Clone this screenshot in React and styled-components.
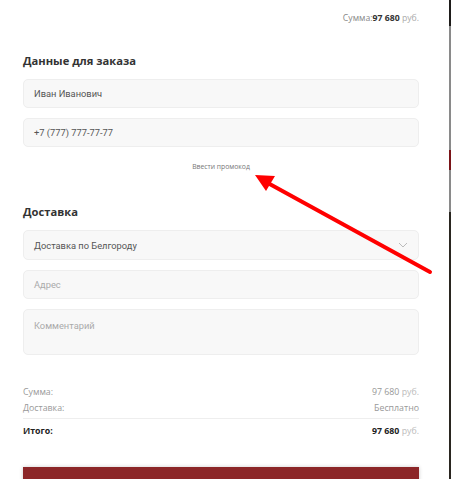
import styled, { createGlobalStyle } from 'styled-components';

const Global = createGlobalStyle`
    html, body {
        margin: 0;
        padding: 0;
        background: #1e1c1a;
    }
    * { box-sizing: border-box; }
`

const Page = styled.div`
    display: flex;
    height: 479px;
    overflow: hidden;
`

const Panel = styled.div`
    position: relative;
    width: 449px;
    background: #fff;
    padding: 11px 30px 0 23px;
    font-family: "Open Sans", sans-serif;
`

const Edge = styled.div`
    width: 2px;
    background: linear-gradient(#1e1c1a 0, #1e1c1a 26px, #8a8a8a 26px, #8a8a8a 150px, #7a1418 150px, #7a1418 170px, #8a8a8a 170px, #8a8a8a 212px, #2a2620 212px);
`

const TopSum = styled.div`
    text-align: right;
    font-size: 8.7px;
    color: #888;
    line-height: 14px;
    b { color: #333; font-weight: 700; }
    span { color: #aaa; }
`

const Title = styled.h3`
    margin: ${p => p.top}px 0 9px;
    font-size: 11.2px;
    font-weight: 700;
    color: #333;
    line-height: 18px;
`

const Field = styled.div`
    display: flex;
    align-items: ${p => p.multi ? 'flex-start' : 'center'};
    justify-content: space-between;
    height: ${p => p.h || 29}px;
    margin-bottom: 10px;
    padding: ${p => p.multi ? '10px' : '0'} 10px 0 10px;
    background: #f8f8f8;
    border: 1px solid #eeeeee;
    border-radius: 5px;
    font-family: Roboto, "Liberation Sans", sans-serif;
    font-size: 9.3px;
    color: ${p => p.placeholder ? '#aaa' : '#555'};
`

const Promo = styled.div`
    text-align: center;
    font-size: 6.8px;
    color: #777;
    margin: 15px 0 0;
    line-height: 10px;
`

const Rows = styled.div`
    margin-top: 29px;
    font-size: 8.8px;
`

const Row = styled.div`
    display: flex;
    justify-content: space-between;
    line-height: 16px;
    color: ${p => p.total ? '#222' : '#999'};
    font-weight: ${p => p.total ? 700 : 400};
    span { color: #bbb; font-weight: 400; }
`

const Divider = styled.div`
    height: 1px;
    background: #eee;
    margin: 2px 0 4px;
`

const Submit = styled.div`
    margin-top: 28px;
    height: 30px;
    background: #8c2628;
    box-shadow: 0 0 4px rgba(0,0,0,.2);
`

const Arrow = styled.svg`
    position: absolute;
    left: 0;
    top: 0;
    pointer-events: none;
`

const App = () => {
    return (
        <Page>
            <Global />
            <Panel>
                <TopSum>Сумма:<b>97 680</b> <span>руб.</span></TopSum>
                <Title top={27}>Данные для заказа</Title>
                <Field>Иван Иванович</Field>
                <Field>+7 (777) 777-77-77</Field>
                <Promo>Ввести промокод</Promo>
                <Title top={31}>Доставка</Title>
                <Field h={30}>
                    Доставка по Белгороду
                    <svg width="10" height="6" viewBox="0 0 10 6">
                        <path d="M1 1l4 4 4-4" fill="none" stroke="#bbb" strokeWidth="1" />
                    </svg>
                </Field>
                <Field placeholder={1}>Адрес</Field>
                <Field placeholder={1} multi={1} h={46}>Комментарий</Field>
                <Rows>
                    <Row>Сумма: <div>97 680 <span>руб.</span></div></Row>
                    <Row>Доставка: <div>Бесплатно</div></Row>
                    <Divider />
                    <Row total={1}>Итого: <div>97 680 <span>руб.</span></div></Row>
                </Rows>
                <Submit />
                <Arrow width="449" height="479">
                    <line x1="430" y1="272" x2="266" y2="182" stroke="#f00" strokeWidth="4" strokeLinecap="round" />
                    <polygon points="255,175 275,176 266,191" fill="#f00" />
                </Arrow>
            </Panel>
            <Edge />
        </Page>
    )
}

export default App;
